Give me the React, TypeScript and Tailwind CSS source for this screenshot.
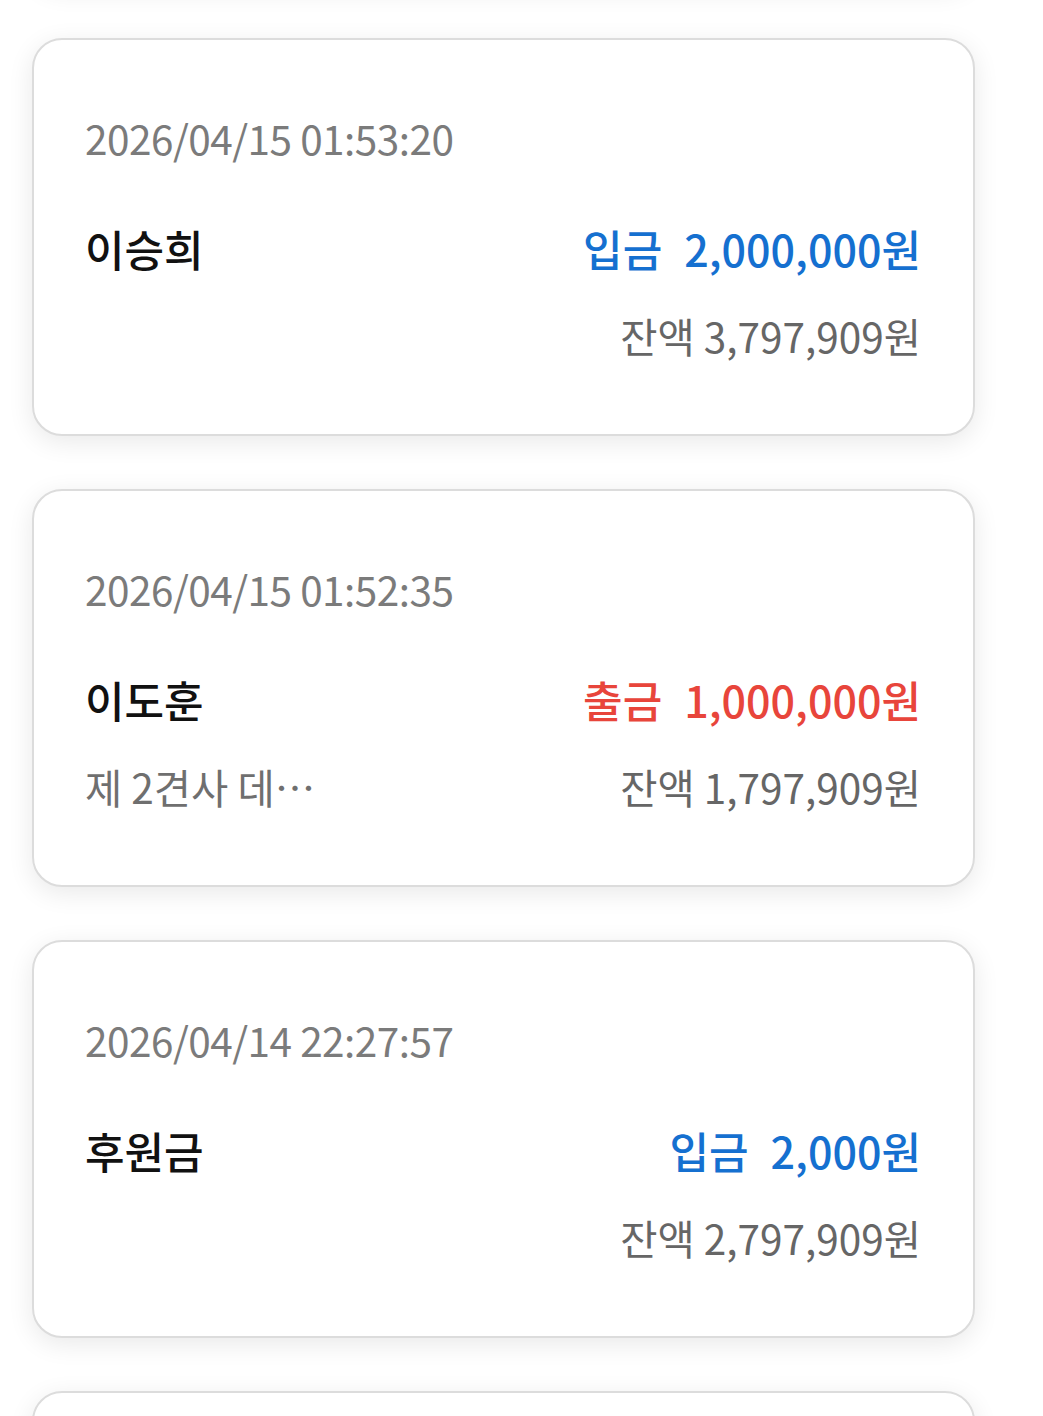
import React from "react";

type Tx = {
  date: string;
  name: string;
  memo?: string;
  kind: "in" | "out";
  amount: string;
  balance: string;
};

const txs: Tx[] = [
  { date: "2026/04/15 01:53:20", name: "이승희", kind: "in", amount: "2,000,000원", balance: "잔액 3,797,909원" },
  { date: "2026/04/15 01:52:35", name: "이도훈", memo: "제 2견사 데…", kind: "out", amount: "1,000,000원", balance: "잔액 1,797,909원" },
  { date: "2026/04/14 22:27:57", name: "후원금", kind: "in", amount: "2,000원", balance: "잔액 2,797,909원" },
];

const font = { fontFamily: '"Noto Sans CJK KR", "Noto Sans", sans-serif' };

function Card({ tx }: { tx?: Tx }) {
  return (
    <div className="h-[398px] w-[943px] rounded-[30px] border-2 border-[#dcdcdc] bg-white shadow-[0_6px_26px_rgba(0,0,0,0.09)] pl-[51px] pr-[52px] pt-[73px]">
      {tx && (
        <>
          <div className="h-[50px] leading-[50px] text-[40.5px] text-[#7b7b7b] tracking-[-0.5px]">{tx.date}</div>
          <div className="mt-[60px] flex h-[50px] items-center justify-between leading-[50px]">
            <div className="text-[43px] font-medium text-[#111]">{tx.name}</div>
            <div className={`text-[43px] font-medium ${tx.kind === "in" ? "text-[#1570d0]" : "text-[#e8453b]"}`}>
              {tx.kind === "in" ? "입금" : "출금"}
              <span className="ml-[22px]">{tx.amount}</span>
            </div>
          </div>
          <div className="mt-[38px] flex h-[50px] items-center justify-between leading-[50px] text-[40.5px] text-[#666]">
            <div className="text-[#6f6f6f]">{tx.memo ?? ""}</div>
            <div>{tx.balance}</div>
          </div>
        </>
      )}
    </div>
  );
}

export default function App() {
  return (
    <div className="h-[1416px] w-[1043px] overflow-hidden bg-white" style={font}>
      <div className="flex flex-col gap-[53px] pl-[32px] mt-[-413px]">
        <Card />
        {txs.map((t, i) => (
          <Card key={i} tx={t} />
        ))}
        <Card />
      </div>
    </div>
  );
}
